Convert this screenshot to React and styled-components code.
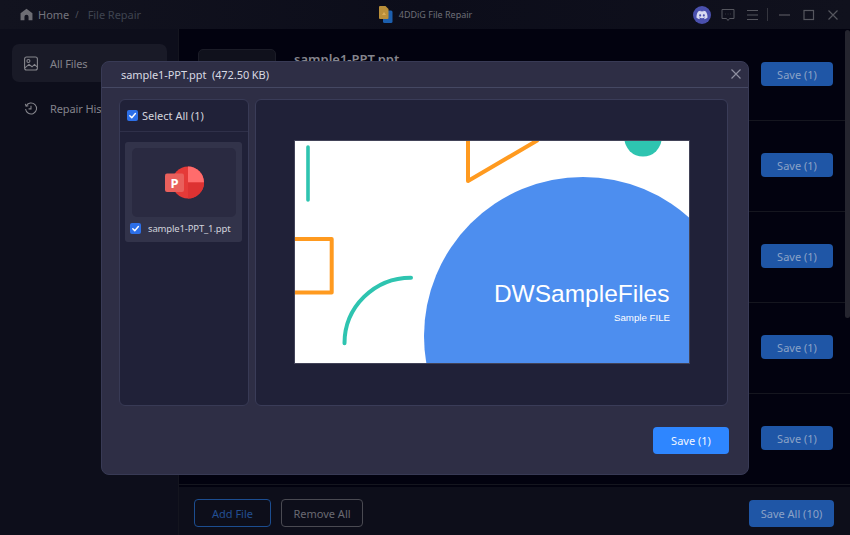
import React from "react";
import styled, { createGlobalStyle } from "styled-components";
import { FaDiscord } from "react-icons/fa";

const Global = createGlobalStyle`
  html, body { margin: 0; padding: 0; background: #02020f; }
  * { box-sizing: border-box; }
  body { font-family: "Noto Sans", "Open Sans", "Liberation Sans", sans-serif; }
`;

const Shell = styled.div`
  position: relative;
  width: 850px;
  height: 535px;
  overflow: hidden;
  display: flex;
  flex-direction: column;
  background: #02020f;
`;

const TopBar = styled.header`
  height: 29px;
  flex: none;
  display: grid;
  grid-template-columns: 1fr auto 1fr;
  align-items: center;
  padding: 0 10px 0 20px;
  background: linear-gradient(90deg, #12131f 0%, #0c0d1a 50%, #10111d 100%);
`;

const Crumbs = styled.nav`
  display: flex;
  align-items: center;
  font-size: 11px;
  color: #74747d;
`;

const CrumbSep = styled.span`
  margin: 0 9px 0 6px;
  font-size: 9px;
  color: #55565f;
`;

const CrumbDim = styled.span`
  color: #3f4450;
  letter-spacing: -0.05px;
`;

const HomeGlyph = styled.svg`
  width: 13px;
  height: 13px;
  margin-right: 5px;
`;

const Brand = styled.div`
  display: flex;
  align-items: center;
  gap: 6px;
  margin-right: 9px;
  font-size: 9px;
  color: #6d6e77;
`;

const WindowTools = styled.div`
  display: flex;
  align-items: center;
  justify-content: flex-end;
`;

const DiscordBadge = styled.span`
  width: 18px;
  height: 18px;
  border-radius: 50%;
  background: #4a50ad;
  color: #d9dbf2;
  display: flex;
  align-items: center;
  justify-content: center;
  font-size: 12px;
  margin-right: 10px;
`;

const ToolGlyph = styled.svg`
  width: 14px;
  height: 14px;
  margin-right: ${(p) => p.$gap}px;
  color: #55565e;
  flex: none;
`;

const ToolDivider = styled.span`
  width: 1px;
  height: 13px;
  background: #35363f;
  margin-right: 9px;
`;

const Body = styled.div`
  flex: 1;
  min-height: 0;
  display: flex;
`;

const Sidebar = styled.aside`
  width: 179px;
  flex: none;
  background: #0d0e1b;
  border-right: 1px solid #14151f;
  padding: 15px 11px 0 12px;
  display: flex;
  flex-direction: column;
  gap: 7px;
`;

const SideItem = styled.div`
  height: 38px;
  border-radius: 7px;
  background: ${(p) => (p.$active ? "#191a27" : "transparent")};
  color: #83838b;
  font-size: 11px;
  letter-spacing: -0.1px;
  display: flex;
  align-items: center;
  gap: 12px;
  padding-left: 12px;
`;

const SideGlyph = styled.svg`
  width: 14px;
  height: 15px;
  color: #85858c;
  flex: none;
`;

const Main = styled.main`
  flex: 1;
  min-width: 0;
  display: flex;
  flex-direction: column;
`;

const FileList = styled.div`
  height: 456px;
  flex: none;
  overflow: hidden;
`;

const FileRow = styled.div`
  height: 91px;
  display: flex;
  align-items: center;
  padding: 0 17px 1px 19px;
  box-shadow: 0 1px 0 #15161f;
`;

const RowThumb = styled.div`
  width: 78px;
  height: 62px;
  border: 1px solid #1b1c27;
  border-radius: 5px;
  background: #10111c;
  margin-right: 18px;
  align-self: flex-start;
  margin-top: 20px;
`;

const RowName = styled.div`
  flex: 1;
  align-self: flex-start;
  margin-top: 21px;
  font-size: 13px;
  font-weight: 600;
  color: #85858d;
`;

const DimSave = styled.div`
  width: 72px;
  height: 24px;
  border-radius: 4px;
  background: #1f56a6;
  color: #8ba2c6;
  font-size: 11px;
  display: flex;
  align-items: center;
  justify-content: center;
`;

const Footer = styled.footer`
  flex: 1;
  margin-top: 2px;
  background: #0d0e1a;
  display: flex;
  align-items: center;
  padding: 4px 16px 0 15px;
  gap: 10px;
`;

const GhostButton = styled.div`
  width: ${(p) => p.$w}px;
  height: 28px;
  border-radius: 4px;
  border: 1px solid ${(p) => p.$line};
  color: ${(p) => p.$ink};
  font-size: 11px;
  display: flex;
  align-items: center;
  justify-content: center;
`;

const SaveAll = styled(DimSave)`
  width: 85px;
  height: 27px;
  margin-left: auto;
`;

const ScrollThumb = styled.div`
  position: absolute;
  top: 30px;
  right: 0;
  width: 5px;
  height: 288px;
  border-radius: 3px;
  background: #25252f;
`;

const Modal = styled.section`
  position: absolute;
  left: 101px;
  top: 61px;
  width: 648px;
  height: 414px;
  background: #2e2e45;
  border: 1px solid #383a55;
  border-radius: 8px;
  display: flex;
  flex-direction: column;
`;

const ModalHead = styled.div`
  height: 26px;
  flex: none;
  border-bottom: 1px solid #454863;
  display: flex;
  align-items: center;
  justify-content: space-between;
  padding: 0 6px 0 19px;
  font-size: 11px;
  letter-spacing: -0.08px;
  color: #d8d9e2;
  white-space: pre;
`;

const CloseGlyph = styled.svg`
  width: 12px;
  height: 12px;
  color: #8e8fa0;
  margin-top: -2px;
`;

const ModalBody = styled.div`
  display: flex;
  gap: 6px;
  padding: 11px 20px 0 17px;
`;

const FilePanel = styled.div`
  width: 130px;
  height: 307px;
  background: #202138;
  border: 1px solid #383a55;
  border-radius: 6px;
  display: flex;
  flex-direction: column;
`;

const PanelHead = styled.div`
  height: 32px;
  flex: none;
  border-bottom: 1px solid #2f3049;
  display: flex;
  align-items: center;
  gap: 4px;
  padding-left: 7px;
  font-size: 11px;
  color: #d3d4dd;
`;

const Tick = styled.span`
  width: 11px;
  height: 11px;
  border-radius: 2px;
  background: #2c6fe8;
  display: flex;
  align-items: center;
  justify-content: center;
  flex: none;
`;

const FileCard = styled.div`
  margin: 10px 6px 0 5px;
  height: 100px;
  background: #32334a;
  border-radius: 3px;
  padding: 6px 6px 0 7px;
`;

const CardThumb = styled.div`
  height: 69px;
  background: #2a2a41;
  border-radius: 5px;
  display: flex;
  align-items: center;
  justify-content: center;
`;

const CardLabel = styled.div`
  display: flex;
  align-items: center;
  gap: 7px;
  margin: 5px 0 0 -2px;
  font-size: 9.5px;
  letter-spacing: -0.15px;
  color: #d3d4dd;
  white-space: nowrap;
`;

const PreviewPanel = styled.div`
  flex: 1;
  height: 307px;
  background: #202138;
  border: 1px solid #3a3c58;
  border-radius: 6px;
  display: flex;
  align-items: flex-start;
  justify-content: center;
  padding-top: 41px;
`;

const Slide = styled.svg`
  width: 394px;
  height: 222px;
  display: block;
  background: #ffffff;
  flex: none;
  outline: 1px solid rgba(90, 90, 110, 0.6);
`;

const ModalFoot = styled.div`
  display: flex;
  justify-content: flex-end;
  padding: 21px 19px 0 0;
`;

const SaveButton = styled.div`
  width: 76px;
  height: 27px;
  border-radius: 4px;
  background: #2e86ff;
  color: #f2f7ff;
  font-size: 11px;
  display: flex;
  align-items: center;
  justify-content: center;
`;

const Check = () => (
  <Tick>
    <svg width="9" height="9" viewBox="0 0 10 10" fill="none">
      <path d="M2 5.2 4.2 7.4 8.2 2.8" stroke="#fff" strokeWidth="1.6" strokeLinecap="round" strokeLinejoin="round" />
    </svg>
  </Tick>
);

const PptIcon = () => (
  <svg width="42" height="38" viewBox="0 0 42 38">
    <circle cx="25" cy="18.500" r="16" fill="#e53a38" />
    <path d="M25 2.500A16 16 0 0 1 41 18.500H25Z" fill="#ff6c6c" />
    <path d="M25 18.500H41A16 16 0 0 1 25 34.500Z" fill="#dd3232" />
    <rect x="2" y="9.500" width="19" height="18.500" rx="2" fill="#e9605c" />
    <text x="11.500" y="24" textAnchor="middle" fontSize="13" fontWeight="700" fontFamily="'Noto Sans', sans-serif" fill="#fff">P</text>
  </svg>
);

const Logo = () => (
  <svg width="14" height="17" viewBox="0 0 14 17">
    <rect x="4" y="4.500" width="9.500" height="12.500" rx="1.500" fill="#1c5fae" />
    <path d="M1 0H6.500L9.500 3V12A1 1 0 0 1 8.500 13H1A1 1 0 0 1 0 12V1A1 1 0 0 1 1 0Z" fill="#b98f3a" />
    <path d="M3 9 5 6 7 9Z" fill="#d9ad55" />
  </svg>
);

export default function App() {
  const rows = [0, 1, 2, 3, 4];
  return (
    <Shell>
      <Global />
      <TopBar>
        <Crumbs>
          <HomeGlyph viewBox="0 0 14 14">
            <path d="M7 .8 13.4 5.600V13.200H9.200V9.400A2.200 2.200 0 0 0 4.800 9.400V13.200H.6V5.600Z" fill="#6d6d74" />
          </HomeGlyph>
          Home
          <CrumbSep>/</CrumbSep>
          <CrumbDim>File Repair</CrumbDim>
        </Crumbs>
        <Brand>
          <Logo />
          4DDiG File Repair
        </Brand>
        <WindowTools>
          <DiscordBadge>
            <FaDiscord />
          </DiscordBadge>
          <ToolGlyph viewBox="0 0 14 14" $gap={10} fill="none" stroke="currentColor" strokeWidth="1">
            <path d="M1 1.500H13V10.500H8.500L7 12.500 5.500 10.500H1Z" />
            <path d="M4.200 6H4.700M6.800 6H7.300M9.300 6H9.800" />
          </ToolGlyph>
          <ToolGlyph viewBox="0 0 14 14" $gap={8} fill="none" stroke="currentColor" strokeWidth="1.100">
            <path d="M2 2.500H13M2 7H13M2 11.500H13" />
          </ToolGlyph>
          <ToolDivider />
          <ToolGlyph viewBox="0 0 14 14" $gap={11} fill="none" stroke="currentColor" strokeWidth="1.200">
            <path d="M2 7H13" />
          </ToolGlyph>
          <ToolGlyph viewBox="0 0 14 14" $gap={10} fill="none" stroke="currentColor" strokeWidth="1.200">
            <rect x="2" y="2.500" width="9.500" height="9" />
          </ToolGlyph>
          <ToolGlyph viewBox="0 0 14 14" $gap={0} fill="none" stroke="currentColor" strokeWidth="1.200">
            <path d="M2.500 2.500 11.500 11.500M11.500 2.500 2.500 11.500" />
          </ToolGlyph>
        </WindowTools>
      </TopBar>
      <Body>
        <Sidebar>
          <SideItem $active>
            <SideGlyph viewBox="0 0 14 15" fill="none" stroke="currentColor" strokeWidth="1.100">
              <rect x=".6" y="1" width="12.800" height="13" rx="2" />
              <circle cx="4.400" cy="5" r="1.500" />
              <path d="M.9 11.800 5 8.400 8 10.800 10.500 8.400 13.100 10.800" />
            </SideGlyph>
            All Files
          </SideItem>
          <SideItem>
            <SideGlyph viewBox="0 0 16 16" fill="none" stroke="currentColor" strokeWidth="1.200">
              <path d="M2.400 5.200A6.300 6.300 0 1 1 1.800 8.600" />
              <path d="M1.500 2.800 2.400 5.400 5 4.800" />
              <path d="M8 4.800V8.400H5.200" />
            </SideGlyph>
            Repair History
          </SideItem>
        </Sidebar>
        <Main>
          <FileList>
            {rows.map((r) => (
              <FileRow key={r}>
                <RowThumb />
                <RowName>sample1-PPT.ppt</RowName>
                <DimSave>Save (1)</DimSave>
              </FileRow>
            ))}
          </FileList>
          <Footer>
            <GhostButton $w={77} $line="#1c4d90" $ink="#234f92">Add File</GhostButton>
            <GhostButton $w={82} $line="#4a4a52" $ink="#6a6a72">Remove All</GhostButton>
            <SaveAll>Save All (10)</SaveAll>
          </Footer>
        </Main>
      </Body>
      <ScrollThumb />
      <Modal>
        <ModalHead>
          <span>sample1-PPT.ppt  (472.50 KB)</span>
          <CloseGlyph viewBox="0 0 12 12" fill="none" stroke="currentColor" strokeWidth="1.200">
            <path d="M1.500 1.500 10.500 10.500M10.500 1.500 1.500 10.500" />
          </CloseGlyph>
        </ModalHead>
        <ModalBody>
          <FilePanel>
            <PanelHead>
              <Check />
              Select All (1)
            </PanelHead>
            <FileCard>
              <CardThumb>
                <PptIcon />
              </CardThumb>
              <CardLabel>
                <Check />
                sample1-PPT_1.ppt
              </CardLabel>
            </FileCard>
          </FilePanel>
          <PreviewPanel>
            <Slide viewBox="0 0 394 222">
              <circle cx="288" cy="195" r="159" fill="#4d8eef" />
              <circle cx="348" cy="-3" r="18.600" fill="#2ec4b0" />
              <path d="M13 6V59" stroke="#2ec4b0" strokeWidth="3.600" strokeLinecap="round" fill="none" />
              <path d="M173-6V40L243-1" stroke="#ff9a1f" strokeWidth="4" strokeLinejoin="round" fill="none" />
              <path d="M-3 98H36.700V151.500H-3" stroke="#ff9a1f" strokeWidth="4" strokeLinejoin="round" fill="none" />
              <path d="M116 136.700A66.500 65.600 0 0 0 49.500 202.300" stroke="#2ec4b0" strokeWidth="4" strokeLinecap="round" fill="none" />
              <text x="374.500" y="160.500" textAnchor="end" fontFamily="'Liberation Sans', Arial, sans-serif" fontSize="24.500" fill="#ffffff">DWSampleFiles</text>
              <text x="375" y="180" textAnchor="end" fontFamily="'Liberation Sans', Arial, sans-serif" fontSize="9.700" fill="#ffffff">Sample FILE</text>
            </Slide>
          </PreviewPanel>
        </ModalBody>
        <ModalFoot>
          <SaveButton>Save (1)</SaveButton>
        </ModalFoot>
      </Modal>
    </Shell>
  );
}
